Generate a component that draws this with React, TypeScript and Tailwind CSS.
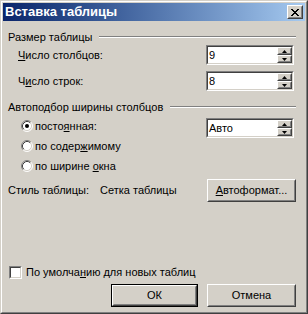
import React from "react";

function Raised({ className, children }: { className: string; children?: React.ReactNode }) {
  return (
    <div className={"border border-t-white border-l-white border-b-[#404040] border-r-[#404040] " + className}>
      <div className="h-full w-full border border-t-[#d4d0c8] border-l-[#d4d0c8] border-b-[#808080] border-r-[#808080] flex items-center justify-center">
        {children}
      </div>
    </div>
  );
}

function Spin({ value }: { value: string }) {
  return (
    <div className="w-[88px] h-[20px] border border-t-[#808080] border-l-[#808080] border-b-white border-r-white">
      <div className="h-full border border-t-[#404040] border-l-[#404040] border-b-[#d4d0c8] border-r-[#d4d0c8] bg-white flex">
        <div className="flex-1 pl-[1px] leading-[16px]">{value}</div>
        <div className="w-[15px] flex flex-col bg-[#d4d0c8]">
          <Raised className="h-[8px]">
            <svg width="5" height="3" viewBox="0 0 5 3" className="block">
              <path d="M2.5 0 L5 3 L0 3 Z" fill="#000" />
            </svg>
          </Raised>
          <Raised className="h-[8px]">
            <svg width="5" height="3" viewBox="0 0 5 3" className="block">
              <path d="M0 0 L5 0 L2.5 3 Z" fill="#000" />
            </svg>
          </Raised>
        </div>
      </div>
    </div>
  );
}

function Radio({ checked }: { checked?: boolean }) {
  return (
    <svg width="12" height="12" viewBox="0 0 12 12" className="block shrink-0">
      <circle cx="6" cy="6" r="5" fill="#fff" />
      <path d="M2.11 9.89 A5.5 5.5 0 0 1 9.89 2.11" fill="none" stroke="#808080" strokeWidth="1" />
      <path d="M9.89 2.11 A5.5 5.5 0 0 1 2.11 9.89" fill="none" stroke="#ffffff" strokeWidth="1" />
      <path d="M2.82 9.18 A4.5 4.5 0 0 1 9.18 2.82" fill="none" stroke="#404040" strokeWidth="1" />
      <path d="M9.18 2.82 A4.5 4.5 0 0 1 2.82 9.18" fill="none" stroke="#d4d0c8" strokeWidth="1" />
      {checked && <circle cx="6" cy="6" r="2" fill="#000" />}
    </svg>
  );
}

function GroupHeader({ text }: { text: string }) {
  return (
    <div className="flex items-center h-[14px]">
      <span className="whitespace-nowrap">{text}</span>
      <div className="flex-1 ml-[7px] flex flex-col">
        <div className="h-[1px] bg-[#808080]" />
        <div className="h-[1px] bg-white" />
      </div>
    </div>
  );
}

export default function App() {
  return (
    <div className="w-[308px] h-[314px] font-['Liberation_Sans',Arial,sans-serif] text-[11px] text-black">
      <div className="w-full h-full border border-t-[#d4d0c8] border-l-[#d4d0c8] border-b-[#404040] border-r-[#404040]">
        <div className="w-full h-full border border-t-white border-l-white border-b-[#808080] border-r-[#808080] bg-[#d4d0c8] p-[1px] flex flex-col">
          {/* Title bar */}
          <div className="h-[18px] bg-linear-to-r from-[#0a246a] to-[#a6caf0] flex items-center justify-between pl-[2px] pr-[2px]">
            <span className="text-white font-bold text-[13px] leading-[18px]">Вставка таблицы</span>
            <Raised className="w-[16px] h-[14px] bg-[#d4d0c8]">
              <svg width="8" height="7" viewBox="0 0 8 7" className="block">
                <path d="M0 0h2v1h1v1h2v-1h1v-1h2v1h-1v1h-1v1h-1v1h1v1h1v1h1v1h-2v-1h-1v-1h-2v1h-1v1h-2v-1h1v-1h1v-1h1v-1h-1v-1h-1v-1h-1z" fill="#000" />
              </svg>
            </Raised>
          </div>

          {/* Body */}
          <div className="flex-1 flex flex-col pl-[5px] pr-[9px] pb-[4px]">
            <div className="mt-[9px]">
              <GroupHeader text="Размер таблицы" />
            </div>
            <div className="mt-[1px] flex items-center justify-between h-[20px]">
              <span className="ml-[10px]">
                <u className="underline-offset-[1px]">Ч</u>исло столбцов:
              </span>
              <div className="mr-[2px]"><Spin value="9" /></div>
            </div>
            <div className="mt-[6px] flex items-center justify-between h-[20px]">
              <span className="ml-[10px]">
                Ч<u className="underline-offset-[1px]">и</u>сло строк:
              </span>
              <div className="mr-[2px]"><Spin value="8" /></div>
            </div>

            <div className="mt-[9px]">
              <GroupHeader text="Автоподбор ширины столбцов" />
            </div>
            <div className="mt-[2px] flex justify-between h-[20px]">
              <div className="ml-[13px] flex items-center gap-[2px]">
                <Radio checked />
                <span>
                  посто<u className="underline-offset-[1px]">я</u>нная:
                </span>
              </div>
              <div className="mr-[2px] mt-[2px]"><Spin value="Авто" /></div>
            </div>
            <div className="flex items-center h-[20px] ml-[13px] gap-[2px]">
              <Radio />
              <span>
                по содер<u className="underline-offset-[1px]">ж</u>имому
              </span>
            </div>
            <div className="flex items-center h-[20px] ml-[13px] gap-[2px]">
              <Radio />
              <span>
                по ширине <u className="underline-offset-[1px]">о</u>кна
              </span>
            </div>

            <div className="mt-[3px] flex items-center h-[23px]">
              <span className="w-[92px]">Стиль таблицы:</span>
              <span className="flex-1">Сетка таблицы</span>
              <Raised className="w-[89px] h-[23px]">
                <span>
                  <u className="underline-offset-[1px]">А</u>втоформат...
                </span>
              </Raised>
            </div>

            <div className="flex-1" />

            <div className="flex items-center h-[13px] ml-[1px] gap-[4px]">
              <div className="w-[13px] h-[13px] border border-t-[#808080] border-l-[#808080] border-b-white border-r-white">
                <div className="w-full h-full border border-t-[#404040] border-l-[#404040] border-b-[#d4d0c8] border-r-[#d4d0c8] bg-white" />
              </div>
              <span>
                По умолча<u className="underline-offset-[1px]">н</u>ию для новых таблиц
              </span>
            </div>

            <div className="mt-[5px] flex justify-end gap-[9px]">
              <div className="w-[87px] h-[23px] border border-black">
                <Raised className="w-full h-full">
                  <span>ОК</span>
                </Raised>
              </div>
              <Raised className="w-[89px] h-[23px]">
                <span>Отмена</span>
              </Raised>
            </div>
          </div>
        </div>
      </div>
    </div>
  );
}
